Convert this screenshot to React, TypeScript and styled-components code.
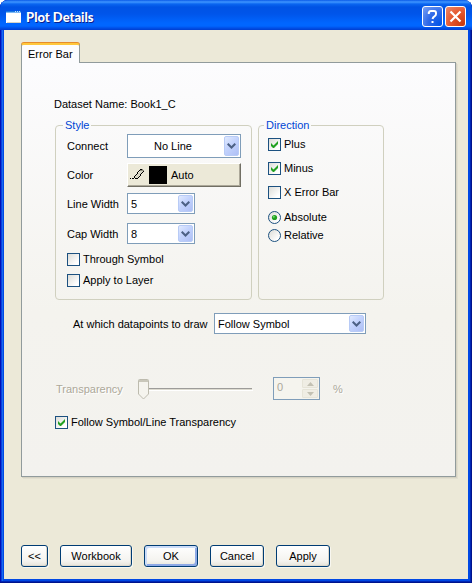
import React from 'react';
import styled, { createGlobalStyle, css } from 'styled-components';

const GlobalStyle = createGlobalStyle`
  *, *::before, *::after { box-sizing: border-box; }
  body { margin: 0; background: #fff; }
  body, button, input, select {
    font-family: "Liberation Sans", Arial, sans-serif;
    font-size: 11px;
    line-height: 14px;
    color: #000;
  }
`;

const Window = styled.main`
  display: flex;
  flex-direction: column;
  min-height: 100vh;
  padding: 0 4px 4px;
  border-radius: 8px 8px 0 0;
  background: #0048e4;
  box-shadow:
    inset -1px -1px #00138c, inset 1px 0 #0010b4,
    inset -2px -2px #0026b4, inset 2px 0 #0a3fe0,
    inset 3px 0 #166aee;
`;

const TitleBar = styled.header`
  display: flex;
  align-items: center;
  gap: 5px;
  height: 30px;
  margin: 0 -4px;
  padding: 3px 6px 0;
  border-radius: 8px 8px 0 0;
  background: linear-gradient(180deg, #0a5be8 0, #3f96ff 2px, #0a66f0 4px, #0053e4 7px, #0055ea 14px, #0066ff 23px, #0066ff 26px, #0050e8 28px, #003dd0 30px);
`;

const Title = styled.h1`
  flex: 1;
  margin: 0;
  font: 900 13px/18px Lato, "Noto Sans", sans-serif;
  color: #fff;
  text-shadow: 1px 1px #0a1f8c;
`;

const CaptionButton = styled.button<{ $danger?: boolean }>`
  display: grid;
  place-items: center;
  width: 21px;
  height: 21px;
  margin-left: -3px;
  padding: 0;
  border: 1px solid #fff;
  border-radius: 3px;
  background: ${p => p.$danger
    ? 'radial-gradient(circle at 90% 90%, #c83a10 0, #e4552c 50%, #ee8a6c 100%)'
    : 'radial-gradient(circle at 90% 90%, #0054e9 0, #2f69e8 50%, #7ba2f4 100%)'};
`;

const Body = styled.div`
  display: flex;
  flex: 1;
  flex-direction: column;
  padding: 12px 12px 12px 17px;
  background: #ece9d8;
`;

const TabList = styled.div`
  display: flex;
`;

const Tab = styled.button`
  z-index: 1;
  height: 20px;
  margin-top: 1px;
  margin-bottom: -1px;
  padding: 0 6px;
  border: 1px solid #919b9c;
  border-top: 2px solid #ffc73c;
  border-bottom: 0;
  border-radius: 3px 3px 0 0;
  background: #fcfcfe;
  box-shadow: 0 -1px #e68b2c;
`;

const Panel = styled.section`
  display: flex;
  flex-direction: column;
  padding: 34px 71px 47px 32px;
  border: 1px solid #919b9c;
  background: linear-gradient(180deg, #fcfcfe 0, #f4f3ee 60%, #f3f2ee 100%);
  box-shadow: 1px 1px #d5d2c2, 2px 2px #e2dfcf;
`;

const DatasetName = styled.p`
  margin: 0 0 7px;
`;

const Groups = styled.div`
  display: grid;
  grid-template-columns: 197fr 126fr;
  gap: 6px;
  margin-left: 1px;
`;

const Group = styled.fieldset`
  min-width: 0;
  margin: 0;
  padding: 2px 10px 12px 11px;
  border: 1px solid #d0d0bf;
  border-radius: 4px;
`;

const DirectionGroup = styled(Group)`
  padding: 5px 8px 12px 9px;
`;

const Legend = styled.legend`
  margin-left: -4px;
  padding: 0 2px;
  color: #0046d5;
`;

const FieldLabel = styled.label<{ $disabled?: boolean }>`
  white-space: nowrap;
  ${p => p.$disabled && css`
    color: #aca899;
    text-shadow: 1px 1px #fff;
  `}
`;

const Field = styled.div<{ $gap: number }>`
  display: grid;
  grid-template-columns: 60px 1fr;
  align-items: center;
  margin-bottom: ${p => p.$gap}px;
`;

const SelectBox = styled.div<{ $size: 'small' | 'full'; $tall?: boolean }>`
  position: relative;
  width: ${p => (p.$size === 'small' ? '68px' : '100%')};
  height: ${p => (p.$tall ? 24 : 21)}px;
`;

const NativeSelect = styled.select<{ $indent: number }>`
  display: block;
  width: 100%;
  height: 100%;
  padding: 0 18px 0 ${p => p.$indent}px;
  border: 1px solid #7f9db9;
  border-radius: 0;
  background: #fff;
  appearance: none;
`;

const DropArrow = styled.span`
  position: absolute;
  top: 2px;
  right: 2px;
  bottom: 2px;
  display: grid;
  place-items: center;
  width: 15px;
  border: 1px solid #b8cbf6;
  border-radius: 2px;
  background: linear-gradient(135deg, #e1eafe 0, #c3d3fd 45%, #aebff5 100%);
  pointer-events: none;
`;

const ColorButton = styled.button`
  display: flex;
  align-items: center;
  gap: 4px;
  height: 24px;
  padding: 0 2px;
  border: 1px solid;
  border-color: #fff #716f64 #716f64 #fff;
  background: #ece9d8;
  box-shadow: inset -1px -1px #aca899;
`;

const Swatch = styled.span`
  width: 18px;
  height: 18px;
  background: #000;
`;

const Choice = styled.label<{ $gap?: number }>`
  display: flex;
  align-items: center;
  gap: 3px;
  margin-bottom: ${p => p.$gap ?? 0}px;
  white-space: nowrap;
`;

const Mark = styled.span`
  display: grid;
  flex: none;
  width: 13px;
  height: 13px;

  & > * { grid-area: 1 / 1; }
  & > svg { pointer-events: none; }
`;

const NativeChoice = styled.input`
  width: 13px;
  height: 13px;
  margin: 0;
  border: 1px solid #1c5180;
  border-radius: ${p => (p.type === 'radio' ? '50%' : '0')};
  background: linear-gradient(135deg, #dcdcd7 0, #fff 80%);
  appearance: none;
`;

const DrawField = styled.div`
  display: grid;
  grid-template-columns: 141px 1fr;
  align-items: center;
  margin: 13px 18px 0 19px;
`;

const TransparencyRow = styled.div`
  display: grid;
  grid-template-columns: 82px 1fr 47px 36px;
  align-items: center;
  margin: 43px 28px 15px 2px;
`;

const Slider = styled.div`
  position: relative;
  height: 22px;
  margin-right: 21px;

  &::before {
    content: '';
    display: block;
    height: 1px;
    margin: 10px 0 0 9px;
    background: #9d9c99;
    box-shadow: 0 1px #dddbd0, 1px 2px #fff;
  }
`;

const Thumb = styled.svg`
  position: absolute;
  top: 1px;
  left: 0;
`;

const Range = styled.input`
  position: absolute;
  inset: 0;
  width: 100%;
  height: 100%;
  margin: 0;
  opacity: 0;
`;

const Spinner = styled.div`
  display: flex;
  height: 23px;
  padding: 1px;
  border: 1px solid #7f9db9;
  background: #f5f4ee;
`;

const SpinnerInput = styled.input`
  flex: 1;
  min-width: 0;
  padding: 0 2px 4px;
  border: 0;
  background: transparent;
  color: #aca899;
`;

const SpinnerButtons = styled.div`
  display: flex;
  flex-direction: column;
  gap: 1px;
  width: 16px;
`;

const SpinButton = styled.button`
  display: grid;
  flex: 1;
  place-items: center;
  min-height: 0;
  padding: 0;
  border: 1px solid #e6e4d8;
  border-radius: 1px;
  background: #efede4;
`;

const Percent = styled.span`
  padding-left: 13px;
  color: #aca899;
  text-shadow: 1px 1px #fff;
`;

const FollowRow = styled.div`
  margin-left: 1px;
`;

const Footer = styled.footer`
  display: flex;
  gap: 12px;
  margin-top: auto;
`;

const PushButton = styled.button<{ $width: number; $primary?: boolean }>`
  width: ${p => p.$width}px;
  height: 22px;
  padding: 0;
  border: 1px solid #003c74;
  border-radius: 3px;
  background: linear-gradient(180deg, #fff 0, #f4f3ef 75%, #e6e3da 100%);
  box-shadow: ${p => (p.$primary
    ? 'inset 2px 2px #cbdcf8, inset -2px -2px #8ea9e6'
    : 'inset -1px -1px #dcd8cc')}, 1px 1px #f8f7f0;
`;

type SelectProps = {
  id: string;
  options: string[];
  size?: 'small' | 'full';
  tall?: boolean;
  indent?: number;
};

function Select({ id, options, size = 'full', tall, indent = 3 }: SelectProps) {
  return (
    <SelectBox $size={size} $tall={tall}>
      <NativeSelect id={id} $indent={indent}>
        {options.map(o => <option key={o}>{o}</option>)}
      </NativeSelect>
      <DropArrow>
        <svg width="9" height="6" viewBox="0 0 9 6" fill="none" stroke="#4d6185" strokeWidth="2">
          <path d="M0.7 0.7 4.5 4.5 8.3 0.7" />
        </svg>
      </DropArrow>
    </SelectBox>
  );
}

type ChoiceProps = { label: string; gap?: number; checked?: boolean };

function CheckBox({ label, gap, checked }: ChoiceProps) {
  return (
    <Choice $gap={gap}>
      <Mark>
        <NativeChoice type="checkbox" defaultChecked={checked} />
        {checked && (
          <svg width="13" height="13" viewBox="0 0 13 13" fill="#21a121">
            <path d="M3 5v3l2 2h1l4-4V3L5.500 7.500z" />
          </svg>
        )}
      </Mark>
      {label}
    </Choice>
  );
}

function Radio({ label, gap, checked }: ChoiceProps) {
  return (
    <Choice $gap={gap}>
      <Mark>
        <NativeChoice type="radio" name="direction-mode" defaultChecked={checked} />
        {checked && (
          <svg width="13" height="13" viewBox="0 0 13 13">
            <circle cx="6.500" cy="6.500" r="2.600" fill="#21a121" />
            <circle cx="5.800" cy="5.800" r="1" fill="#6fd86a" />
          </svg>
        )}
      </Mark>
      {label}
    </Choice>
  );
}

export default function App() {
  return (
    <>
      <GlobalStyle />
      <Window>
        <TitleBar>
          <svg width="15" height="12" viewBox="0 0 15 12">
            <path d="M0 0h15v12H0z" fill="#fff" />
            <path d="M0 0h15v1H0z" fill="#1a78e0" />
            <path d="M0 1h15v1H0z" fill="#7fb8f4" />
            <path d="M9 0h1v1H9zM11 0h1v1h-1zM13 0h1v1h-1z" fill="#bfe0ff" />
            <path d="M1 11h14v1H1z" fill="#d8d4c6" />
          </svg>
          <Title>Plot Details</Title>
          <CaptionButton type="button" aria-label="Help">
            <svg width="13" height="15" viewBox="0 0 13 15" fill="none" stroke="#fff" strokeWidth="2">
              <path d="M2.800 5V3.600Q3.300 2 5 2h3Q10 2 10 4v1Q10 6.500 8.500 7.300T6.500 10" />
              <path d="M5.500 13h2" />
            </svg>
          </CaptionButton>
          <CaptionButton type="button" aria-label="Close" $danger>
            <svg width="13" height="13" viewBox="0 0 13 13" fill="none" stroke="#fff" strokeWidth="2.200">
              <path d="M1.500 1.500l10 10M11.500 1.500l-10 10" />
            </svg>
          </CaptionButton>
        </TitleBar>

        <Body>
          <TabList role="tablist">
            <Tab type="button" role="tab" aria-selected="true">Error Bar</Tab>
          </TabList>
          <Panel role="tabpanel">
            <DatasetName>Dataset Name: Book1_C</DatasetName>

            <Groups>
              <Group>
                <Legend>Style</Legend>
                <Field $gap={5}>
                  <FieldLabel htmlFor="connect">Connect</FieldLabel>
                  <Select id="connect" options={['No Line']} tall indent={26} />
                </Field>
                <Field $gap={6}>
                  <FieldLabel htmlFor="color">Color</FieldLabel>
                  <ColorButton id="color" type="button">
                    <svg width="15" height="14" viewBox="0 0 15 14" shapeRendering="crispEdges">
                      <path d="M5 8h1V7h1V6h1V5h1V4h1V3h1V2h3v1h-1v1h-1v1h-1v1h-1v1h-1v1H9v1H8v1H5z" fill="#d8d6c6" />
                      <path d="M10 1h3v1h1v2h-1V3h-3z" fill="#8c8a7c" />
                      <path d="M4 8h1v2H4zM5 7h1v1H5zM6 6h1v1H6zM7 4h1v2H7zM8 3h1v1H8zM9 2h1v1H9zM10 1h2v1h-2zM5 10h3v1H5zM8 9h1v1H8zM9 8h1v1H9zM10 6h1v2h-1zM11 5h1v1h-1zM12 4h1v1h-1zM13 3h1v1h-1zM0 10h1v1H0zM2 10h2v1H2z" fill="#000" />
                    </svg>
                    <Swatch />
                    Auto
                  </ColorButton>
                </Field>
                <Field $gap={9}>
                  <FieldLabel htmlFor="line-width">Line Width</FieldLabel>
                  <Select id="line-width" options={['5']} size="small" />
                </Field>
                <Field $gap={8}>
                  <FieldLabel htmlFor="cap-width">Cap Width</FieldLabel>
                  <Select id="cap-width" options={['8']} size="small" />
                </Field>
                <CheckBox label="Through Symbol" gap={7} />
                <CheckBox label="Apply to Layer" />
              </Group>

              <DirectionGroup>
                <Legend>Direction</Legend>
                <CheckBox label="Plus" gap={10} checked />
                <CheckBox label="Minus" gap={10} checked />
                <CheckBox label="X Error Bar" gap={11} />
                <Radio label="Absolute" gap={4} checked />
                <Radio label="Relative" />
              </DirectionGroup>
            </Groups>

            <DrawField>
              <FieldLabel htmlFor="datapoints">At which datapoints to draw</FieldLabel>
              <Select id="datapoints" options={['Follow Symbol']} />
            </DrawField>

            <TransparencyRow>
              <FieldLabel htmlFor="transparency" $disabled>Transparency</FieldLabel>
              <Slider>
                <Thumb width="11" height="21" viewBox="0 0 11 21">
                  <path d="M.5 1.500Q.5.5 1.500.5h8q1 0 1 1V15l-5 5-5-5z" fill="#f5f4ee" stroke="#bdbbae" />
                  <path d="M1 1h9v2H1z" fill="#c9c7ba" />
                </Thumb>
                <Range id="transparency" type="range" min={0} max={100} defaultValue={0} disabled />
              </Slider>
              <Spinner>
                <SpinnerInput type="text" aria-label="Transparency percent" defaultValue="0" disabled />
                <SpinnerButtons>
                  <SpinButton type="button" aria-label="Increase" disabled>
                    <svg width="7" height="4" viewBox="0 0 7 4"><path d="M0 4l3.500-4L7 4z" fill="#c3c1b3" /></svg>
                  </SpinButton>
                  <SpinButton type="button" aria-label="Decrease" disabled>
                    <svg width="7" height="4" viewBox="0 0 7 4"><path d="M0 0l3.500 4L7 0z" fill="#c3c1b3" /></svg>
                  </SpinButton>
                </SpinnerButtons>
              </Spinner>
              <Percent>%</Percent>
            </TransparencyRow>

            <FollowRow>
              <CheckBox label="Follow Symbol/Line Transparency" checked />
            </FollowRow>
          </Panel>

          <Footer>
            <PushButton type="button" $width={27}>&lt;&lt;</PushButton>
            <PushButton type="button" $width={72}>Workbook</PushButton>
            <PushButton type="button" $width={54} $primary>OK</PushButton>
            <PushButton type="button" $width={54}>Cancel</PushButton>
            <PushButton type="button" $width={54}>Apply</PushButton>
          </Footer>
        </Body>
      </Window>
    </>
  );
}
